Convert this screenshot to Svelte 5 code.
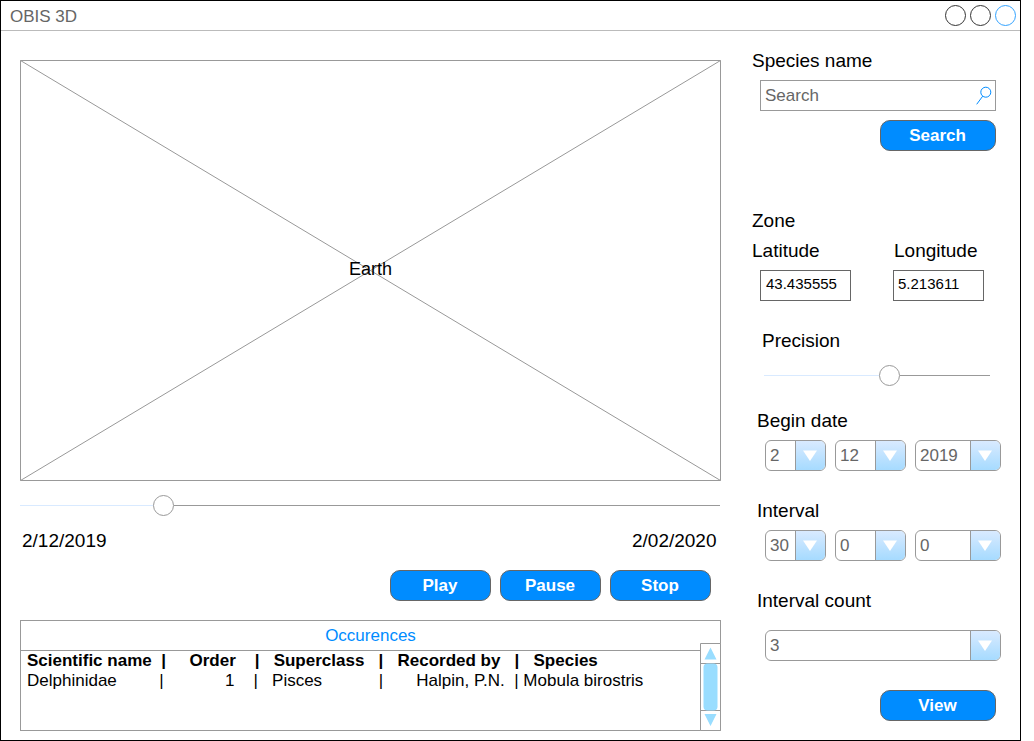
<script>
  const heading = 'Scientific name  |     Order    |   Superclass   |   Recorded by   |   Species';
  const rows = ['Delphinidae         |             1    |   Pisces            |       Halpin, P.N.  | Mobula birostris'];
  const beginDate = [['2', 61], ['12', 71], ['2019', 86]];
  const interval = [['30', 61], ['0', 71], ['0', 86]];
</script>

{#snippet select(value, width)}
  <div class="select" style:width="{width}px">
    <span class="value">{value}</span>
    <span class="drop">
      <svg width="14" height="11" viewBox="0 0 14 11"><path d="M0 .5h14L7 11z" fill="#fff" /></svg>
    </span>
  </div>
{/snippet}

{#snippet slider(before)}
  <div class="slider">
    <span class="done" style:width="{before}px"></span>
    <span class="knob"></span>
    <span class="rest"></span>
  </div>
{/snippet}

<div class="window">
  <header>
    <span>OBIS 3D</span>
    <div class="controls"><i></i><i></i><i class="active"></i></div>
  </header>

  <main>
    <section class="viewer">
      <div class="earth">
        <svg width="701" height="421" viewBox="0 0 701 421" fill="none" stroke="#999">
          <path d="M.5 .5h700v420H.5zM.5 .5l700 420M700.5 .5L.5 420.5" />
        </svg>
        <span>Earth</span>
      </div>
      {@render slider(133)}
      <div class="dates"><span>2/12/2019</span><span>2/02/2020</span></div>
      <div class="playback">
        <button>Play</button>
        <button>Pause</button>
        <button>Stop</button>
      </div>
      <div class="results">
        <h2>Occurences</h2>
        <div class="line bold">{heading}</div>
        {#each rows as row}
          <div class="line">{row}</div>
        {/each}
        <div class="scroll">
          <svg width="21" height="88" viewBox="0 0 21 88">
            <path d="M.5 .5h20v87H.5z" fill="#fff" stroke="#999" />
            <path d="M.5 20.5h20M.5 67.5h20" stroke="#999" />
            <rect x="3.5" y="20.5" width="14" height="47" rx="4" fill="#9df" />
            <path d="M10.5 4.5l6 12h-12zM10.5 83l6-12h-12z" fill="#9df" />
          </svg>
        </div>
      </div>
    </section>

    <section class="panel">
      <h3>Species name</h3>
      <div class="search">
        <span>Search</span>
        <svg width="16" height="20" viewBox="0 0 16 20" fill="none" stroke="#008cff">
          <circle cx="9.8" cy="7.2" r="5" /><path d="M6.7 11.2L.7 19.3" />
        </svg>
      </div>
      <button class="wide">Search</button>

      <h3 class="zone">Zone</h3>
      <div class="coords">
        <div><h3>Latitude</h3><div class="field">43.435555</div></div>
        <div><h3>Longitude</h3><div class="field">5.213611</div></div>
      </div>

      <h3 class="precision">Precision</h3>
      <div class="precision-slider">{@render slider(115)}</div>

      <h3 class="group">Begin date</h3>
      <div class="selects">
        {#each beginDate as [value, width]}{@render select(value, width)}{/each}
      </div>
      <h3 class="group">Interval</h3>
      <div class="selects">
        {#each interval as [value, width]}{@render select(value, width)}{/each}
      </div>
      <h3 class="group">Interval count</h3>
      <div class="selects count">{@render select('3', 236)}</div>
      <button class="wide view">View</button>
    </section>
  </main>
</div>

<style>
  :global(body) { margin: 0; background: #fff; overflow: hidden; }
  * { box-sizing: border-box; }
  .window {
    width: 1021px;
    height: 741px;
    border: 1px solid #000;
    font: 17px/20px "Liberation Sans", Arial, sans-serif;
    color: #000;
  }
  svg { display: block; flex: none; }
  h2, h3 { margin: 0; font-weight: normal; }
  h3 { height: 20px; font-size: 19px; line-height: 22px; }
  header {
    display: flex;
    align-items: center;
    justify-content: space-between;
    height: 30px;
    padding: 0 4px 0 9px;
    border-bottom: 1px solid #bbb;
    color: #666;
  }
  header > span { padding-top: 2px; }
  .controls { display: flex; gap: 4px; }
  .controls i { width: 21px; height: 21px; border: 1px solid #333; border-radius: 50%; }
  .controls .active { border-color: #33a3ff; }
  main { display: flex; }
  .viewer { width: 720px; padding: 29px 0 0 19px; }
  .earth { display: grid; place-items: center; font-size: 18px; }
  .earth > * { grid-area: 1 / 1; }
  .earth span { padding-bottom: 3px; }
  .slider { display: flex; align-items: center; height: 21px; }
  .viewer > .slider { width: 700px; margin-top: 14px; }
  .done { height: 1px; background: #d9eaff; }
  .rest { flex: 1; height: 1px; background: #999; }
  .knob { width: 21px; height: 21px; border: 1px solid #999; border-radius: 50%; }
  .dates {
    display: flex;
    justify-content: space-between;
    height: 20px;
    margin-top: 14px;
    padding: 0 4.5px 0 2px;
    font-size: 19px;
    line-height: 22px;
  }
  .playback { display: flex; justify-content: flex-end; gap: 9px; margin: 20px 10px 19px 0; }
  button {
    width: 101px;
    height: 31px;
    padding: 0 1px 0 0;
    border: 1px solid #666;
    border-radius: 10px;
    background: #008cff;
    color: #fff;
    font: bold 17px/20px "Liberation Sans", Arial, sans-serif;
  }
  .results { position: relative; height: 111px; border: 1px solid #999; }
  .results h2 {
    height: 30px;
    border-bottom: 1px solid #999;
    color: #008cff;
    font-size: 17px;
    line-height: 29px;
    text-align: center;
  }
  .line { padding-left: 6px; white-space: pre; }
  .bold { font-weight: bold; }
  .scroll { position: absolute; right: -1px; bottom: -1px; }
  .panel { width: 280px; padding: 19px 0 0 31px; }
  .search {
    display: flex;
    align-items: center;
    justify-content: space-between;
    width: 236px;
    height: 31px;
    margin: 10px 0 9px 8px;
    padding: 0 3px 0 4px;
    border: 1px solid #999;
    color: #666;
  }
  .search svg { margin-bottom: 1px; }
  .wide { display: block; width: 116px; margin-left: 128px; }
  .zone { margin-top: 59px; }
  .coords { display: flex; gap: 51px; margin-top: 10px; }
  .coords > div { width: 91px; }
  .field {
    width: 91px;
    height: 31px;
    margin: 10px 0 0 8px;
    padding: 4px 5px;
    border: 1px solid #666;
    font-size: 15px;
    line-height: 18px;
  }
  .coords > div:last-child .field { margin-left: -1px; padding-left: 4px; }
  .precision { margin: 29px 0 0 10px; }
  .precision-slider { width: 226px; margin: 15px 0 24px 12px; }
  .group { margin-left: 5px; }
  .selects { display: flex; gap: 9px; margin: 10px 0 29px 13px; }
  .selects.count { margin-top: 20px; }
  .select {
    display: flex;
    height: 31px;
    border: 1px solid #999;
    border-radius: 6px;
    overflow: hidden;
    color: #666;
  }
  .value { flex: 1; padding-left: 4px; line-height: 29px; }
  .drop {
    display: grid;
    place-items: center;
    width: 30px;
    padding-right: 1px;
    border-left: 1px solid #999;
    background: linear-gradient(#d9eaff, #a6dbff);
  }
</style>
